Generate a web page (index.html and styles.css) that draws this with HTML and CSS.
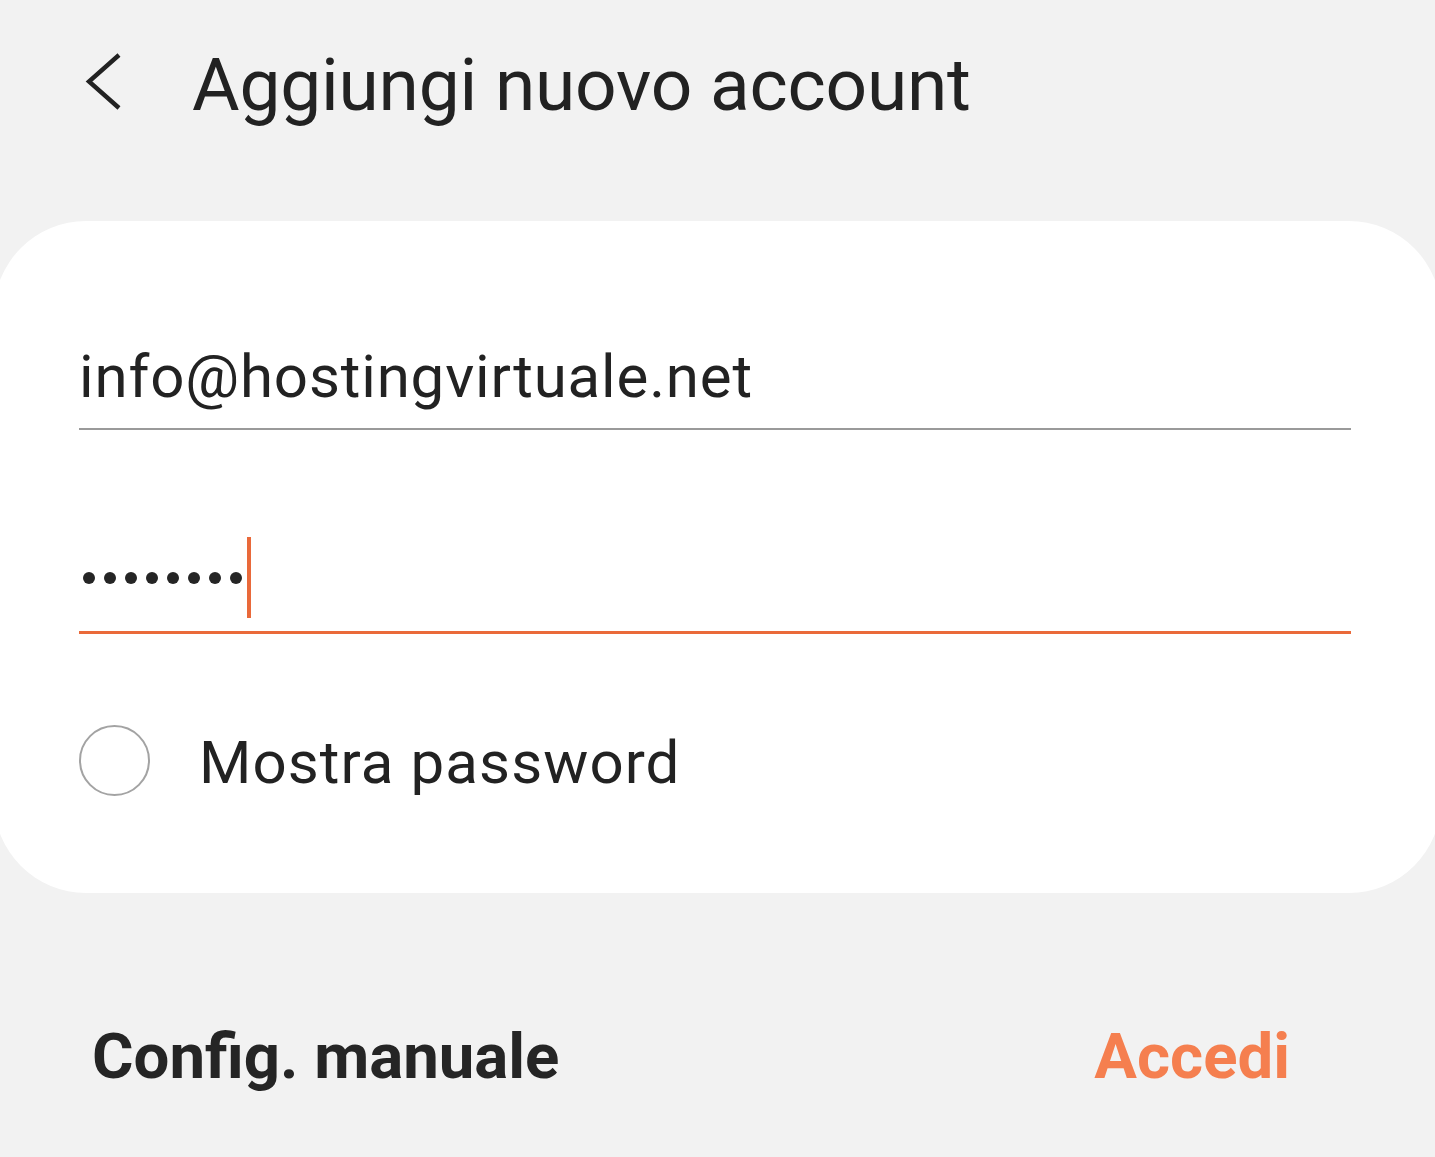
FILE: index.html
```html
<!DOCTYPE html>
<html lang="it">
<head>
<meta charset="utf-8">
<title>Aggiungi nuovo account</title>
<link rel="stylesheet" href="styles.css">
</head>
<body>
<div class="screen">
  <header class="topbar">
    <span class="back">
      <svg width="40" height="60" viewBox="0 0 40 60"><polyline points="35,2 5,28.5 35,55" fill="none" stroke="#222" stroke-width="4.4" stroke-linecap="butt" stroke-linejoin="miter"/></svg>
    </span>
    <h1 class="title">Aggiungi nuovo account</h1>
  </header>
  <section class="card">
    <div class="field email">info@hostingvirtuale.net</div>
    <div class="field password">
      <span class="dot"></span><span class="dot"></span><span class="dot"></span><span class="dot"></span><span class="dot"></span><span class="dot"></span><span class="dot"></span><span class="dot"></span>
      <span class="cursor"></span>
    </div>
    <div class="check-row">
      <span class="radio"></span>
      <span class="check-label">Mostra password</span>
    </div>
  </section>
  <footer class="actions">
    <span class="btn manual">Config. manuale</span>
    <span class="btn login">Accedi</span>
  </footer>
</div>
</body>
</html>
```

FILE: styles.css
```css
html, body {
  margin: 0;
  padding: 0;
  background: #f2f2f2;
}
body {
  font-family: Roboto, "Noto Sans", sans-serif;
  color: #232323;
  width: 1435px;
  height: 1157px;
  overflow: hidden;
}
.screen {
  display: flex;
  flex-direction: column;
}
.topbar {
  height: 221px;
  display: flex;
  align-items: flex-start;
  padding-left: 84px;
  box-sizing: border-box;
}
.back {
  display: block;
  margin-top: 53px;
  width: 40px;
  height: 60px;
}
.back svg { display: block; }
.title {
  margin: 48px 0 0 68px;
  font-size: 73px;
  line-height: 74px;
  font-weight: 400;
  letter-spacing: -0.2px;
  color: #222;
}
.card {
  margin: 0 -6px;
  background: #fff;
  border-radius: 92px;
  padding: 120px 90px 97px 85px;
  display: flex;
  flex-direction: column;
}
.field {
  font-size: 60px;
  line-height: 72px;
}
.email {
  padding-bottom: 15px;
  border-bottom: 2px solid #9a9a9a;
  color: #222;
  letter-spacing: 0.85px;
}
.password {
  margin-top: 94px;
  display: flex;
  align-items: center;
  height: 81px;
  padding: 13px 0 13px 4px;
  border-bottom: 3px solid #ea6a3a;
}
.dot {
  width: 12px;
  height: 12px;
  border-radius: 50%;
  background: #252525;
  margin-right: 9px;
}
.cursor {
  width: 4px;
  height: 81px;
  background: #e9693a;
  margin-left: -4px;
}
.check-row {
  margin-top: 91px;
  display: flex;
  align-items: center;
  height: 71px;
}
.radio {
  width: 67px;
  height: 67px;
  border: 2px solid #a3a3a3;
  border-radius: 50%;
  flex: none;
}
.check-label {
  margin-left: 49px;
  font-size: 60px;
  line-height: 72px;
  padding-top: 4px;
  letter-spacing: 1.1px;
  color: #222;
}
.actions {
  margin-top: 125px;
  display: flex;
  justify-content: space-between;
  padding: 0 145px 0 92px;
}
.btn {
  font-size: 63.5px;
  line-height: 77px;
  font-weight: 700;
}
.manual { color: #252525; }
.login { color: #f57f4f; }
```
